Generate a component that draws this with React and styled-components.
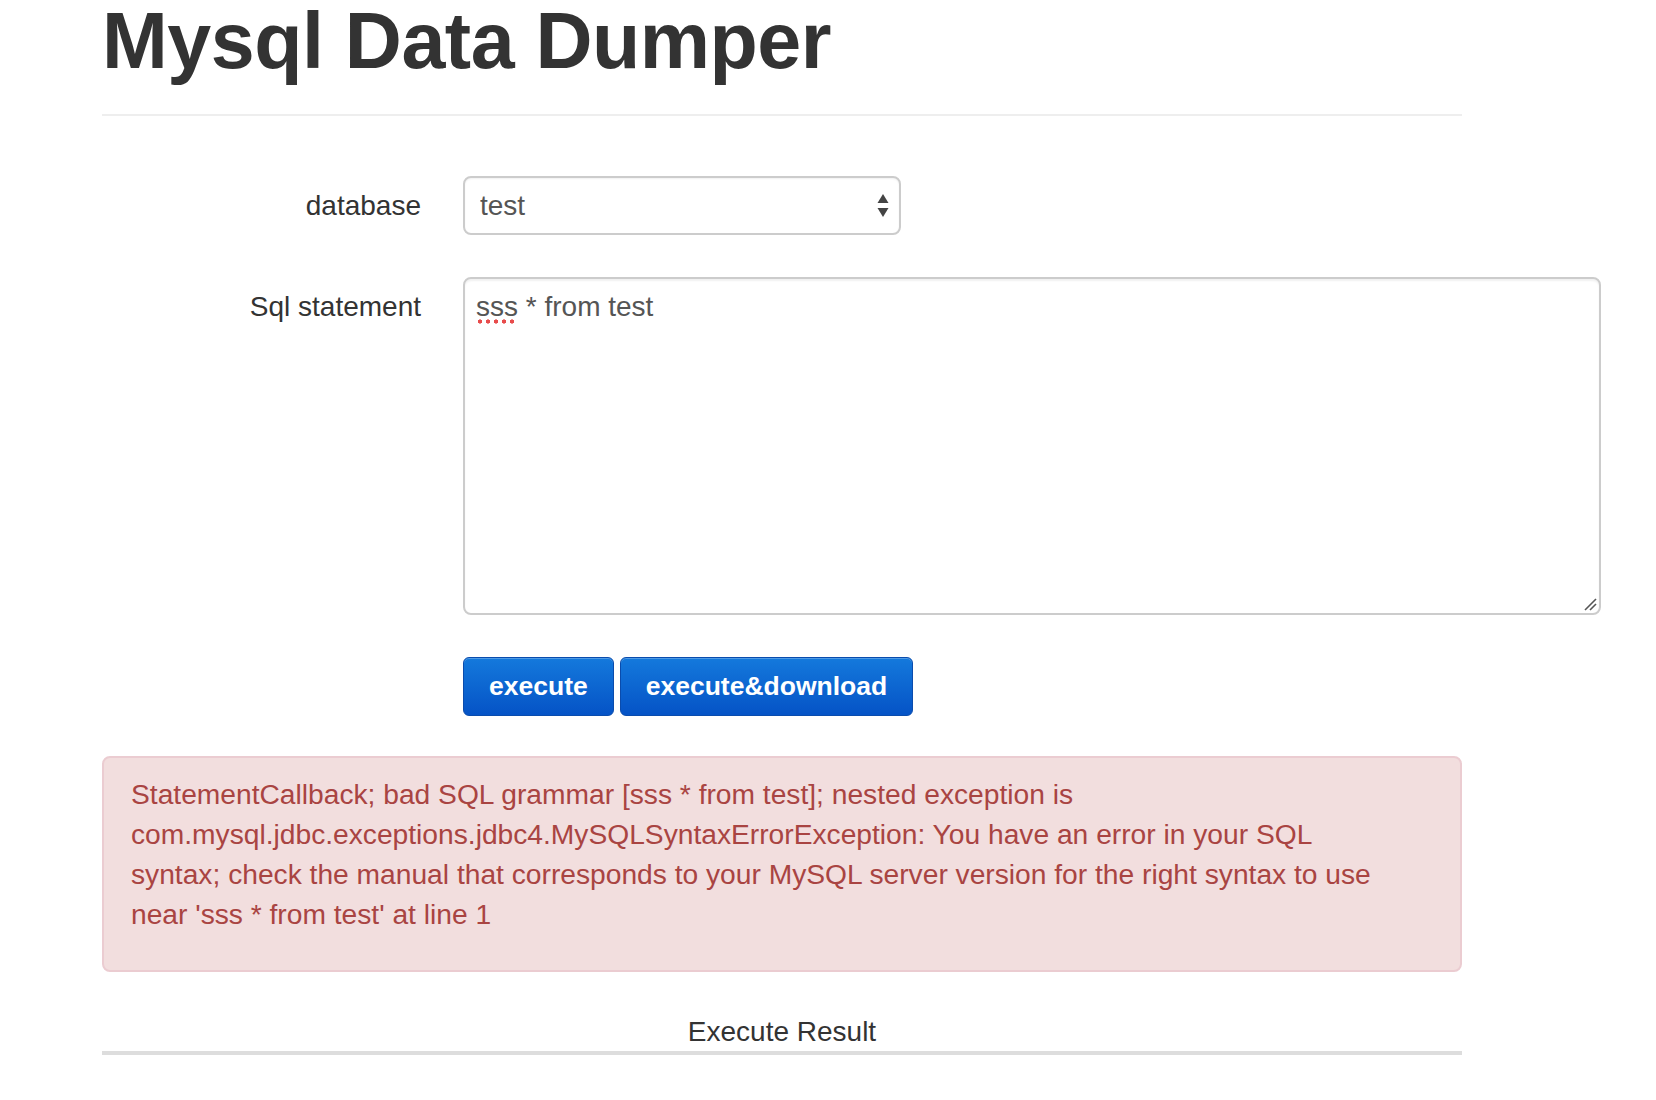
import React from 'react';
import styled, { createGlobalStyle } from 'styled-components';

const GlobalStyle = createGlobalStyle`
  body {
    margin: 0;
    background: #fff;
    font-family: "Liberation Sans", Helvetica, Arial, sans-serif;
    color: #333;
  }
`;

const Page = styled.div`
  width: 1360px;
  margin-left: 102px;
`;

const Title = styled.h1`
  margin: 0;
  padding-top: 1px;
  font-size: 79px;
  line-height: 1;
  font-weight: bold;
  color: #333;
  letter-spacing: -0.5px;
`;

const Divider = styled.hr`
  margin: 34px 0 0;
  border: 0;
  border-top: 2px solid #eee;
`;

const Form = styled.form`
  display: grid;
  grid-template-columns: 319px 1138px;
  column-gap: 42px;
  row-gap: 42px;
  margin-top: 60px;
`;

const Label = styled.label`
  text-align: right;
  font-size: 28px;
  line-height: 40px;
  color: #333;
  padding-top: ${(p) => p.$top || 0}px;
  align-self: ${(p) => (p.$center ? 'center' : 'start')};
`;

const SelectWrap = styled.div`
  position: relative;
  width: 438px;
`;

const Select = styled.select`
  appearance: none;
  width: 100%;
  height: 59px;
  padding: 0 40px 0 15px;
  font-family: inherit;
  font-size: 28px;
  color: #555;
  background: #fff;
  border: 2px solid #ccc;
  border-radius: 8px;
  box-shadow: inset 0 1px 2px rgba(0, 0, 0, 0.06);
`;

const Arrows = styled.svg`
  position: absolute;
  right: 12px;
  top: 17px;
  pointer-events: none;
`;

const AreaWrap = styled.div`
  position: relative;
`;

const TextArea = styled.textarea`
  display: block;
  box-sizing: border-box;
  width: 1138px;
  height: 338px;
  padding: 8px 11px;
  font-family: inherit;
  font-size: 28px;
  line-height: 40px;
  color: #555;
  border: 2px solid #ccc;
  border-radius: 8px;
  box-shadow: inset 0 2px 2px rgba(0, 0, 0, 0.06);
  outline: none;
  resize: none;
`;

// red spell-check dots under the misspelled word
const Squiggle = styled.span`
  position: absolute;
  left: 13px;
  top: 42px;
  width: 40px;
  height: 5px;
  background: radial-gradient(circle, #e84c4c 1.9px, transparent 2.3px) 0 0 / 8px 5px repeat-x;
  pointer-events: none;
`;

const Grip = styled.svg`
  position: absolute;
  right: 4px;
  bottom: 4px;
  pointer-events: none;
`;

const Actions = styled.div`
  grid-column: 2;
  display: flex;
  gap: 6px;
`;

const Button = styled.button`
  height: 59px;
  padding: 0 25px;
  font-family: inherit;
  font-size: 26.5px;
  font-weight: bold;
  color: #fff;
  background: linear-gradient(#1479dc, #0553c6);
  border: 1px solid #0a4cad;
  border-radius: 6px;
  box-shadow: inset 0 1px 0 rgba(255, 255, 255, 0.25);
  cursor: pointer;
`;

const Alert = styled.div`
  margin-top: 40px;
  padding: 16px 60px 36px 27px;
  font-size: 28.2px;
  line-height: 40px;
  color: #a94442;
  background: #f2dede;
  border: 2px solid #ebccd1;
  border-radius: 8px;
`;

const ResultHeading = styled.h4`
  margin: 40px 0 0;
  font-size: 28px;
  line-height: 39px;
  font-weight: normal;
  text-align: center;
  color: #333;
  border-bottom: 4px solid #ddd;
`;

export default function App() {
  return (
    <>
      <GlobalStyle />
      <Page>
        <Title>Mysql Data Dumper</Title>
        <Divider />
        <Form onSubmit={(e) => e.preventDefault()}>
          <Label $center htmlFor="database">database</Label>
          <SelectWrap>
            <Select id="database" defaultValue="test">
              <option value="test">test</option>
            </Select>
            <Arrows width="12" height="25" viewBox="0 0 12 25">
              <polygon points="0.5,10 6,1 11.5,10" fill="#444" />
              <polygon points="0.5,15 11.5,15 6,24" fill="#444" />
            </Arrows>
          </SelectWrap>

          <Label $top={10} htmlFor="sql">Sql statement</Label>
          <AreaWrap>
            <TextArea id="sql" spellCheck={false} defaultValue="sss * from test" />
            <Squiggle />
            <Grip width="14" height="14" viewBox="0 0 14 14">
              <line x1="2" y1="13" x2="13" y2="2" stroke="#555" strokeWidth="1.6" />
              <line x1="7" y1="13" x2="13" y2="7" stroke="#555" strokeWidth="1.6" />
            </Grip>
          </AreaWrap>

          <Actions>
            <Button type="submit">execute</Button>
            <Button type="button">execute&amp;download</Button>
          </Actions>
        </Form>

        <Alert>
          StatementCallback; bad SQL grammar [sss * from test]; nested exception is
          com.mysql.jdbc.exceptions.jdbc4.MySQLSyntaxErrorException: You have an error in your SQL
          syntax; check the manual that corresponds to your MySQL server version for the right
          syntax to use near 'sss * from test' at line 1
        </Alert>

        <ResultHeading>Execute Result</ResultHeading>
      </Page>
    </>
  );
}
